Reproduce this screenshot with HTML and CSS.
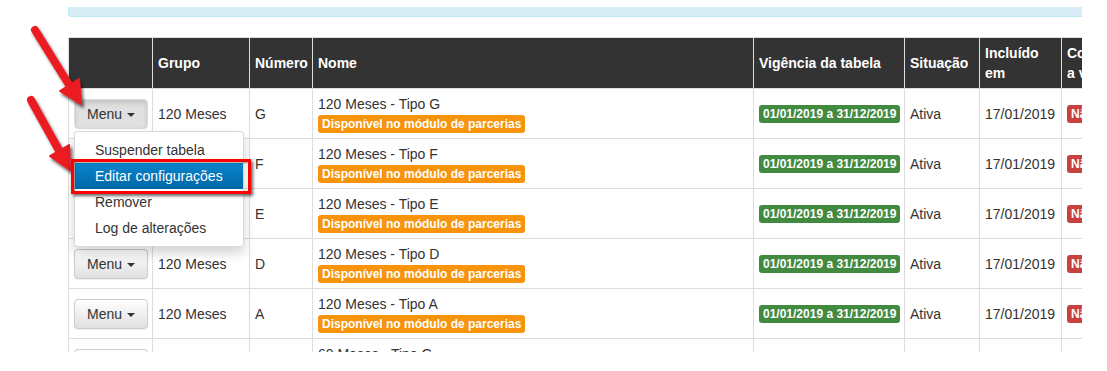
FILE: index.html
```html
<!DOCTYPE html>
<html lang="pt-BR">
  <head>
    <meta charset="UTF-8" />
    <meta name="viewport" content="width=device-width, initial-scale=1.0" />
    <title>Tabelas</title>
    <link rel="stylesheet" href="styles.css">
  </head>
  <body>
    <div class="frame">
      <div class="alert-info"></div>

      <table class="grid">
        <colgroup>
          <col class="c-menu" />
          <col class="c-grupo" />
          <col class="c-num" />
          <col class="c-nome" />
          <col class="c-vig" />
          <col class="c-sit" />
          <col class="c-inc" />
          <col class="c-last" />
        </colgroup>
        <thead>
          <tr>
            <th></th>
            <th>Grupo</th>
            <th>Número</th>
            <th>Nome</th>
            <th>Vigência da tabela</th>
            <th>Situação</th>
            <th>Incluído em</th>
            <th>Cobrança a vista</th>
          </tr>
        </thead>
        <tbody>
          <tr>
            <td>
              <div class="btn-group open">
                <button class="btn">Menu <span class="caret"></span></button>
                <ul class="dropdown">
                  <li>Suspender tabela</li>
                  <li class="active">Editar configurações<span class="mark"></span></li>
                  <li>Remover</li>
                  <li>Log de alterações</li>
                </ul>
              </div>
            </td>
            <td>120 Meses</td>
            <td>G</td>
            <td><div>120 Meses - Tipo G</div><span class="tag tag-orange">Disponível no módulo de parcerias</span></td>
            <td><span class="tag tag-green">01/01/2019 a 31/12/2019</span></td>
            <td>Ativa</td>
            <td>17/01/2019</td>
            <td><span class="tag tag-red">Não</span></td>
          </tr>
          <tr>
            <td><button class="btn">Menu <span class="caret"></span></button></td>
            <td>120 Meses</td>
            <td>F</td>
            <td><div>120 Meses - Tipo F</div><span class="tag tag-orange">Disponível no módulo de parcerias</span></td>
            <td><span class="tag tag-green">01/01/2019 a 31/12/2019</span></td>
            <td>Ativa</td>
            <td>17/01/2019</td>
            <td><span class="tag tag-red">Não</span></td>
          </tr>
          <tr>
            <td><button class="btn">Menu <span class="caret"></span></button></td>
            <td>120 Meses</td>
            <td>E</td>
            <td><div>120 Meses - Tipo E</div><span class="tag tag-orange">Disponível no módulo de parcerias</span></td>
            <td><span class="tag tag-green">01/01/2019 a 31/12/2019</span></td>
            <td>Ativa</td>
            <td>17/01/2019</td>
            <td><span class="tag tag-red">Não</span></td>
          </tr>
          <tr>
            <td><button class="btn">Menu <span class="caret"></span></button></td>
            <td>120 Meses</td>
            <td>D</td>
            <td><div>120 Meses - Tipo D</div><span class="tag tag-orange">Disponível no módulo de parcerias</span></td>
            <td><span class="tag tag-green">01/01/2019 a 31/12/2019</span></td>
            <td>Ativa</td>
            <td>17/01/2019</td>
            <td><span class="tag tag-red">Não</span></td>
          </tr>
          <tr>
            <td><button class="btn">Menu <span class="caret"></span></button></td>
            <td>120 Meses</td>
            <td>A</td>
            <td><div>120 Meses - Tipo A</div><span class="tag tag-orange">Disponível no módulo de parcerias</span></td>
            <td><span class="tag tag-green">01/01/2019 a 31/12/2019</span></td>
            <td>Ativa</td>
            <td>17/01/2019</td>
            <td><span class="tag tag-red">Não</span></td>
          </tr>
          <tr>
            <td><button class="btn">Menu <span class="caret"></span></button></td>
            <td>60 Meses</td>
            <td>G</td>
            <td><div>60 Meses - Tipo G</div><span class="tag tag-orange">Disponível no módulo de parcerias</span></td>
            <td><span class="tag tag-green">01/01/2019 a 31/12/2019</span></td>
            <td>Ativa</td>
            <td>17/01/2019</td>
            <td><span class="tag tag-red">Não</span></td>
          </tr>
        </tbody>
      </table>
    </div>

    <!-- annotation arrows -->
    <svg class="arrows" width="130" height="200" viewBox="0 0 130 200">
      <defs>
        <filter id="shade" x="-40%" y="-40%" width="180%" height="180%">
          <feDropShadow dx="2" dy="3" stdDeviation="1.6" flood-color="#000" flood-opacity="0.6" />
        </filter>
      </defs>
      <g filter="url(#shade)" fill="#ea1c24" stroke="#ea1c24" stroke-linejoin="round">
        <line x1="35" y1="30" x2="71" y2="88" stroke-width="8" stroke-linecap="round" />
        <polygon points="81,104 60,91 79,79" stroke-width="2" />
        <line x1="31" y1="100" x2="61" y2="154" stroke-width="8" stroke-linecap="round" />
        <polygon points="70,170 50,156 69,145" stroke-width="2" />
      </g>
    </svg>
  </body>
</html>
```

FILE: styles.css
```css
body {
  margin: 0;
  position: relative;
  font-family: "Liberation Sans", Arial, sans-serif;
  font-size: 14px;
  line-height: 20px;
  color: #333;
  background-color: #fff;
}
.frame {
  margin-left: 68px;
  width: 1014px;
  height: 352px;
  overflow: hidden;
}
.alert-info {
  height: 9px;
  margin: 7px -20px 20px 0;
  background-color: #d9edf7;
  border: 1px solid #bce8f1;
  border-top: none;
  border-radius: 0 0 4px 4px;
}
.grid {
  table-layout: fixed;
  width: 1063px;
  border-collapse: collapse;
}
.c-menu { width: 84px; }
.c-grupo { width: 97px; }
.c-num { width: 63px; }
.c-nome { width: 441px; }
.c-vig { width: 151px; }
.c-sit { width: 75px; }
.c-inc { width: 82px; }
.c-last { width: 70px; }
.grid th,
.grid td {
  border: 1px solid #ddd;
  padding: 5px;
  text-align: left;
  vertical-align: middle;
}
.grid th {
  background-color: #333;
  color: #fff;
  font-weight: bold;
  height: 39px;
}
.grid td {
  padding-bottom: 4px;
}
.btn-group {
  position: relative;
  display: inline-block;
}
.btn {
  font-family: inherit;
  font-size: 14px;
  line-height: 20px;
  color: #333;
  padding: 4px 12px;
  border: 1px solid #ccc;
  border-radius: 4px;
  background-image: linear-gradient(#fff, #e0e0e0);
  box-shadow: inset 0 1px 0 rgba(255, 255, 255, 0.15), 0 1px 1px rgba(0, 0, 0, 0.075);
  white-space: nowrap;
  vertical-align: middle;
  cursor: pointer;
}
.open .btn {
  background-image: none;
  background-color: #e0e0e0;
  border-color: #dbdbdb;
  box-shadow: inset 0 3px 5px rgba(0, 0, 0, 0.125);
}
.caret {
  display: inline-block;
  width: 0;
  height: 0;
  margin-left: 1px;
  vertical-align: middle;
  border-top: 4px solid #333;
  border-left: 4px solid transparent;
  border-right: 4px solid transparent;
}
.dropdown {
  position: absolute;
  top: 100%;
  left: 0;
  z-index: 5;
  margin: 2px 0 0;
  padding: 5px 0;
  list-style: none;
  background-color: #fff;
  border: 1px solid rgba(0, 0, 0, 0.15);
  border-radius: 4px;
  box-shadow: 0 6px 12px rgba(0, 0, 0, 0.175);
  white-space: nowrap;
}
.dropdown li {
  position: relative;
  padding: 3px 20px;
  color: #333;
}
.dropdown li.active {
  color: #fff;
  background-image: linear-gradient(#0a84cb, #0067a6);
}
.mark {
  position: absolute;
  left: -4px;
  right: -8px;
  top: -4px;
  bottom: -5px;
  border: 3px solid #f00;
  box-shadow: 2px 2px 3px rgba(0, 0, 0, 0.6), inset 1px 1px 2px rgba(0, 0, 0, 0.4);
}
.tag {
  display: inline-block;
  vertical-align: top;
  margin-top: 1px;
  font-size: 12px;
  font-weight: bold;
  line-height: 12px;
  padding: 3px 4px;
  color: #fff;
  border-radius: 3px;
  white-space: nowrap;
}
.tag-orange {
  background-color: #f7940b;
}
.tag-green {
  background-color: #418a3f;
}
.tag-red {
  background-color: #c9413f;
}
.arrows {
  position: absolute;
  top: 0;
  left: 0;
  pointer-events: none;
}
```
